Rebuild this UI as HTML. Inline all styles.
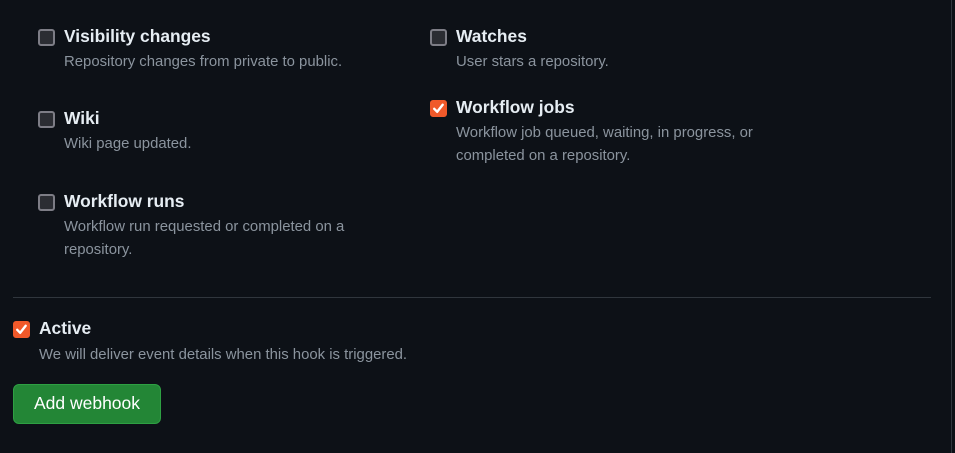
<!DOCTYPE html>
<html><head><meta charset="utf-8"><style>
*{margin:0;padding:0;box-sizing:border-box}
body{width:955px;height:453px;background:#0d1117;font-family:"Liberation Sans",Arial,sans-serif;position:relative;overflow:hidden}
.cb{position:absolute;width:17px;height:17px;border:2px solid #7d7d86;border-radius:3px;background:#2b2d33}
.cb.on{background:#f0592a;border-color:#f0592a}
.cb.on svg{position:absolute;left:0;top:0}
.t{position:absolute;font-weight:bold;font-size:17.4px;color:#e6edf3;white-space:nowrap;line-height:20px}
.d{position:absolute;font-size:14.9px;color:#8b949e;line-height:22.5px;width:340px}
.vl{position:absolute;left:951px;top:0;width:1px;height:453px;background:#30363d}
.hr{position:absolute;left:13px;top:297px;width:918px;height:1px;background:#30363d}
.btn{position:absolute;left:13px;top:384px;width:148px;height:40px;background:#238636;border:1px solid #2ea043;border-radius:6px;color:#fff;font-size:17.5px;line-height:36px;text-align:center}
</style></head><body>
<div class="vl"></div>
<div class="cb" style="left:38px;top:29px"></div>
<div class="t" style="left:64px;top:26px">Visibility changes</div>
<div class="d" style="left:64px;top:51px">Repository changes from private to public.</div>

<div class="cb" style="left:38px;top:111px"></div>
<div class="t" style="left:64px;top:108px">Wiki</div>
<div class="d" style="left:64px;top:133px">Wiki page updated.</div>

<div class="cb" style="left:38px;top:194px"></div>
<div class="t" style="left:64px;top:191px">Workflow runs</div>
<div class="d" style="left:64px;top:216px;width:310px">Workflow run requested or completed on a repository.</div>

<div class="cb" style="left:430px;top:29px"></div>
<div class="t" style="left:456px;top:26px">Watches</div>
<div class="d" style="left:456px;top:51px">User stars a repository.</div>

<div class="cb on" style="left:430px;top:100px"><svg width="13" height="13" viewBox="0 0 13 13"><path d="M2.2 6.8l3 3 5.5-7" stroke="#fff" stroke-width="2.4" fill="none" stroke-linecap="round" stroke-linejoin="round"/></svg></div>
<div class="t" style="left:456px;top:97px">Workflow jobs</div>
<div class="d" style="left:456px;top:122px;width:340px">Workflow job queued, waiting, in progress, or completed on a repository.</div>

<div class="hr"></div>
<div class="cb on" style="left:13px;top:321px"><svg width="13" height="13" viewBox="0 0 13 13"><path d="M2.2 6.8l3 3 5.5-7" stroke="#fff" stroke-width="2.4" fill="none" stroke-linecap="round" stroke-linejoin="round"/></svg></div>
<div class="t" style="left:39px;top:318px">Active</div>
<div class="d" style="left:39px;top:344px;width:500px">We will deliver event details when this hook is triggered.</div>
<div class="btn">Add webhook</div>
</body></html>
